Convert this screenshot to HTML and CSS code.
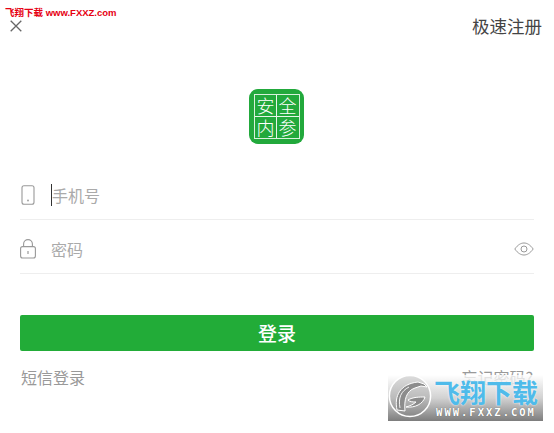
FILE: index.html
```html
<!DOCTYPE html>
<html lang="zh-CN">
<head>
    <meta charset="UTF-8">
    <meta name="viewport" content="width=device-width, initial-scale=1.0">
    <title>登录</title>
    <link rel="stylesheet" href="styles.css">
</head>
<body>

    <div class="mark-top">飞翔下载 www.FXXZ.com</div>

    <header class="top-bar">
        <svg class="close-icon" width="12" height="12" viewBox="0 0 12 12">
            <path d="M0.7 0.7L11.3 11.3M11.3 0.7L0.7 11.3" stroke="#666" stroke-width="1.3" fill="none"/>
        </svg>
        <a class="quick-reg">极速注册</a>
    </header>

    <div class="logo">
        <div class="logo-grid">
            <span>安</span>
            <span>全</span>
            <span>内</span>
            <span>参</span>
        </div>
    </div>

    <form class="login-form">
        <div class="field">
            <svg class="field-icon" width="16" height="20" viewBox="0 0 16 20">
                <rect x="2" y="0.7" width="12" height="18.6" rx="2" fill="none" stroke="#999" stroke-width="1.1"/>
                <circle cx="8" cy="15.5" r="0.9" fill="#999"/>
            </svg>
            <span class="caret"></span>
            <span class="placeholder">手机号</span>
        </div>
        <div class="field">
            <svg class="field-icon" width="16" height="20" viewBox="0 0 16 20">
                <rect x="0.6" y="7.6" width="14.8" height="11.4" rx="2" fill="none" stroke="#999" stroke-width="1.1"/>
                <path d="M3.6 7.6V5a4.4 4.4 0 0 1 8.8 0v2.6" fill="none" stroke="#999" stroke-width="1.1"/>
                <path d="M8 12v3" stroke="#999" stroke-width="1.2"/>
            </svg>
            <span class="placeholder">密码</span>
            <svg class="eye-icon" width="20" height="14" viewBox="0 0 20 14">
                <path d="M0.8 7C4 2.6 7 1 10 1s6 1.6 9.2 6C16 11.4 13 13 10 13S4 11.4 0.8 7z" fill="none" stroke="#999" stroke-width="1"/>
                <circle cx="10" cy="7" r="3" fill="none" stroke="#999" stroke-width="1"/>
            </svg>
        </div>

        <button type="button" class="login-btn">登录</button>

        <div class="links">
            <a>短信登录</a>
            <a>忘记密码?</a>
        </div>
    </form>

    <div class="mark-bottom">
        <svg class="mark-logo" width="44" height="44" viewBox="0 0 44 44">
            <circle cx="22" cy="22" r="20.6" fill="rgba(120,120,120,0.25)" stroke="#fff" stroke-width="1.5"/>
            <path d="M9 36C6 22 12 10 30 8l6 2 3 3-6-1-6 2C18 17 16 26 17 37z" fill="#8c8c8c" stroke="#fff" stroke-width="1"/>
            <path d="M12 34C10 24 13 17 21 13" fill="none" stroke="#fff" stroke-width="0.9"/>
            <path d="M20 26c5-3 11-3 17-3-2 7-10 11-19 10 4-1 8-3 10-5-3 0-6 0-8-2z" fill="#8c8c8c" stroke="#fff" stroke-width="1"/>
        </svg>
        <div class="mark-text">
            <div class="mark-title">飞翔下载</div>
            <div class="mark-url">WWW.FXXZ.COM</div>
        </div>
    </div>

</body>
</html>
```

FILE: styles.css
```css
html, body {
    height: 100%;
}
body {
    margin: 0;
    padding: 0;
    position: relative;
    overflow: hidden;
    background-color: #fff;
    font-family: "Noto Sans CJK SC", "Liberation Sans", sans-serif;
    color: #999;
}
a {
    display: block;
}
.mark-top {
    position: absolute;
    top: 6px;
    left: 5px;
    color: #e60012;
    font-size: 9.5px;
    line-height: 14px;
    font-weight: 700;
    font-family: "Liberation Sans", "Noto Sans CJK SC", sans-serif;
    white-space: nowrap;
}
.top-bar {
    display: flex;
    justify-content: space-between;
    align-items: center;
    box-sizing: border-box;
    height: 54px;
    padding: 0 12px 2px 10px;
}
.close-icon {
    display: block;
}
.quick-reg {
    font-size: 17.5px;
    line-height: 24px;
    color: #444;
}
.logo {
    display: flex;
    align-items: center;
    justify-content: center;
    width: 55px;
    height: 55px;
    margin: 35px 0 0 249px;
    border-radius: 9px;
    background-color: #22a93c;
}
.logo-grid {
    display: grid;
    grid-template-columns: 1fr 1fr;
    width: 46px;
    height: 45px;
    box-sizing: border-box;
    border: 1px solid #d8f0dc;
    background:
        linear-gradient(#e8f6ea, #e8f6ea) center / 1px 100% no-repeat,
        linear-gradient(#e8f6ea, #e8f6ea) center / 100% 1px no-repeat;
}
.logo-grid span {
    display: flex;
    align-items: center;
    justify-content: center;
    color: #fff;
    font-size: 18px;
    line-height: 21px;
    font-weight: 300;
}
.login-form {
    margin: 22px 20px 0;
}
.field {
    display: flex;
    align-items: center;
    height: 48px;
    padding-top: 5px;
    border-bottom: 1px solid #eee;
}
.field-icon {
    flex: none;
    margin-right: 1px;
}
.caret {
    width: 1px;
    height: 22px;
    margin-left: 14px;
    background-color: #333;
}
.placeholder {
    margin-left: 14px;
    font-size: 16px;
    line-height: 22px;
    color: #aaa;
}
.caret + .placeholder {
    margin-left: 0;
}
.eye-icon {
    margin-left: auto;
}
.login-btn {
    display: block;
    width: 100%;
    height: 36px;
    margin-top: 41px;
    padding: 0 0 2px;
    border: none;
    border-radius: 2px;
    background-color: #22ac38;
    color: #fff;
    font-family: inherit;
    font-size: 19px;
    font-weight: 500;
}
.links {
    display: flex;
    justify-content: space-between;
    margin-top: 14px;
    font-size: 16px;
    line-height: 24px;
    padding: 0 1px;
}
.mark-bottom {
    position: absolute;
    left: 388px;
    top: 375px;
    display: flex;
    align-items: center;
    gap: 0;
    width: 155px;
    height: 46px;
    box-sizing: border-box;
    background: linear-gradient(to bottom, rgba(255,255,255,0.75), rgba(205,205,205,0.9) 50%, #7d7d7d);
}
.mark-logo {
    flex: none;
    margin-top: -4px;
}
.mark-text {
    flex: 1;
    padding-right: 3px;
    text-align: center;
}
.mark-title {
    font-size: 26px;
    line-height: 29px;
    font-weight: 700;
    color: #4fbbea;
    text-shadow: 0 0 2px #fff;
    white-space: nowrap;
}
.mark-url {
    font-family: "DejaVu Sans Mono", monospace;
    font-size: 10.5px;
    line-height: 13px;
    font-weight: 700;
    letter-spacing: 2px;
    color: #fff;
    text-shadow: 0 0 1px #555;
    white-space: nowrap;
}
```
